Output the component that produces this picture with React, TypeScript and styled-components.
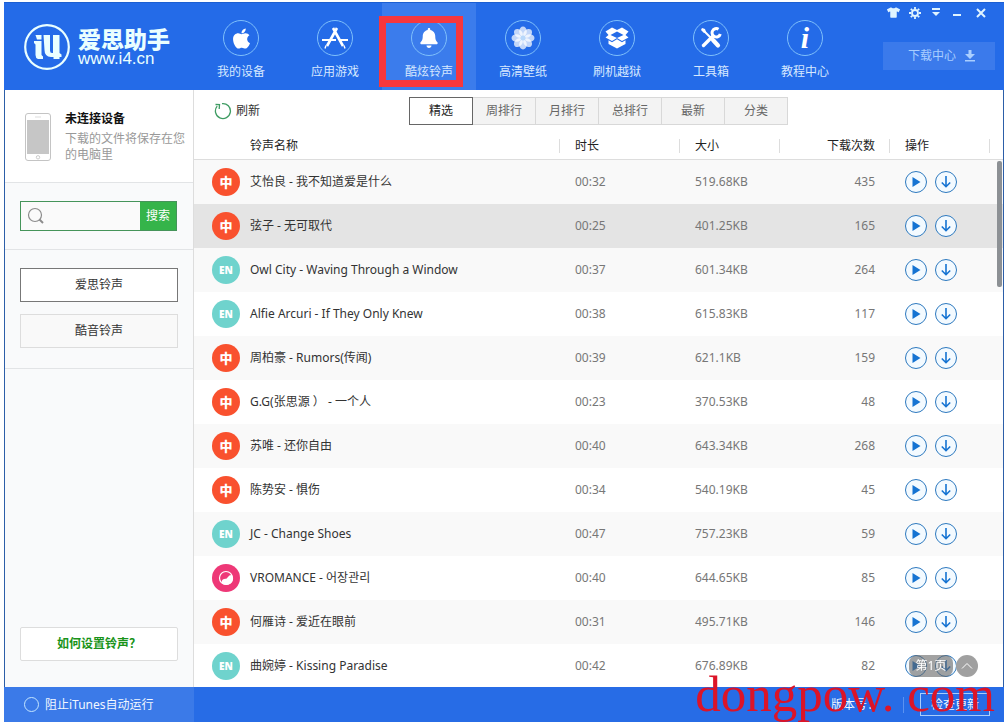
import React from "react";
import styled, { createGlobalStyle } from "styled-components";
import { FaApple, FaBell, FaTshirt } from "react-icons/fa";

const GlobalStyle = createGlobalStyle`
  * { box-sizing: border-box; }
  body {
    margin: 0;
    background: #fff;
    font-family: "Noto Sans", "Noto Sans CJK SC", "Noto Sans CJK KR", sans-serif;
    font-size: 12px;
    line-height: 16px;
    color: #333;
  }
  button, input { font: inherit; color: inherit; margin: 0; padding: 0; border-radius: 0; }
  button { cursor: pointer; }
`;

const Page = styled.div`
  height: 100vh;
  min-height: 560px;
  padding: 2px 2px 2px 4px;
`;

const AppWindow = styled.div`
  position: relative;
  height: 100%;
  display: grid;
  grid-template-rows: 88px minmax(0, 1fr) 35px;
  background: #fff;
`;

const Header = styled.header`
  display: flex;
  background: #246be8;
  border-top: 1px solid #1c5fd2;
  color: #e4f1ff;
`;

const Brand = styled.a`
  flex: none;
  width: 190px;
  padding: 0 0 0 20px;
  display: flex;
  align-items: center;
  gap: 8px;
  color: #eaffff;
  text-decoration: none;
`;

const BrandText = styled.span`
  display: flex;
  flex-direction: column;
`;

const BrandName = styled.strong`
  font-size: 23px;
  line-height: 24px;
  font-weight: 900;
  white-space: nowrap;
`;

const BrandUrl = styled.span`
  font-family: "Liberation Sans", sans-serif;
  font-size: 17px;
  line-height: 16px;
`;

const Nav = styled.nav`
  display: flex;
  flex: none;
`;

const NavItem = styled.a<{ $active?: boolean }>`
  position: relative;
  width: 94px;
  padding-top: 17px;
  display: flex;
  flex-direction: column;
  align-items: center;
  gap: 8px;
  color: #d6e8ff;
  text-decoration: none;
  background: ${(p) => (p.$active ? "#3b7cec" : "transparent")};
`;

const NavIcon = styled.span`
  width: 36px;
  height: 36px;
  display: grid;
  place-items: center;
  border: 1px solid #7fc0fb;
  border-radius: 50%;
  color: #fff;
`;

const Marker = styled.span`
  position: absolute;
  left: -3px;
  top: 13px;
  width: 84px;
  height: 71px;
  border: 7px solid #f7373d;
  pointer-events: none;
`;

const HeaderSide = styled.div`
  flex: 1;
  display: flex;
  flex-direction: column;
  align-items: flex-end;
  gap: 20px;
  padding-right: 9px;
`;

const WindowControls = styled.div`
  display: flex;
`;

const ControlButton = styled.button<{ $wide?: boolean }>`
  width: ${(p) => (p.$wide ? 28 : 21)}px;
  height: 19px;
  display: grid;
  place-items: center;
  border: 0;
  background: none;
  color: #e0f4ff;
`;

const DownloadCenter = styled.button`
  width: 112px;
  height: 28px;
  padding-left: 6px;
  display: flex;
  align-items: center;
  justify-content: center;
  gap: 8px;
  border: 0;
  background: #3b7aeb;
  color: #a9ceff;
`;

const Body = styled.div`
  display: grid;
  grid-template-columns: 189px minmax(0, 1fr);
  min-height: 0;
  border: solid #2c5ea8;
  border-width: 0 1px;
`;

const Sidebar = styled.aside`
  display: flex;
  flex-direction: column;
  background: #f9fafb;
  border-right: 1px solid #ddd;
`;

const Device = styled.section`
  height: 93px;
  display: flex;
  gap: 14px;
  padding: 23px 0 0 20px;
  background: #fff;
  border-bottom: 1px solid #e2e4e6;
`;

const DeviceTitle = styled.h2`
  margin: 0 0 6px;
  font-size: 12px;
  line-height: 12px;
  font-weight: 700;
  color: #111;
`;

const DeviceNote = styled.p`
  margin: 0;
  width: 124px;
  color: #999;
`;

const SearchSection = styled.form`
  height: 67px;
  padding: 18px 16px 18px 15px;
  border-bottom: 1px solid #e2e4e6;
`;

const SearchBox = styled.div`
  display: flex;
  height: 30px;
  border: 1px solid #45945a;
  background: #fafafa;
`;

const SearchLabel = styled.label`
  flex: 1;
  min-width: 0;
  display: flex;
  align-items: center;
  gap: 4px;
  padding-left: 6px;
`;

const SearchInput = styled.input.attrs({ type: "text" })`
  flex: 1;
  min-width: 0;
  border: 0;
  outline: 0;
  background: transparent;
`;

const SearchButton = styled.button`
  width: 36px;
  border: 0;
  background: #35b44a;
  color: #fff;
`;

const Sources = styled.section`
  display: flex;
  flex-direction: column;
  gap: 12px;
  padding: 18px 15px 20px;
  border-bottom: 1px solid #e2e4e6;
`;

const SourceButton = styled.button<{ $active?: boolean }>`
  height: 34px;
  border: 1px solid ${(p) => (p.$active ? "#777" : "#ddd")};
  background: ${(p) => (p.$active ? "#fff" : "#f9f9f9")};
`;

const HelpButton = styled.button`
  height: 34px;
  margin: auto 15px 26px;
  border: 1px solid #ddd;
  border-radius: 2px;
  background: #fff;
  color: #199319;
  font-weight: 700;
`;

const Main = styled.main`
  position: relative;
  display: flex;
  flex-direction: column;
  min-width: 0;
  min-height: 0;
`;

const Toolbar = styled.div`
  height: 42px;
  display: grid;
  grid-template-columns: 1fr auto 1fr;
  align-items: center;
  padding: 0 20px;
`;

const Refresh = styled.button`
  justify-self: start;
  display: flex;
  align-items: center;
  gap: 4px;
  border: 0;
  background: none;
`;

const Tabs = styled.div`
  display: flex;
`;

const Tab = styled.button<{ $active?: boolean }>`
  width: ${(p) => (p.$active ? 64 : 63)}px;
  height: 28px;
  border: 1px solid ${(p) => (p.$active ? "#666" : "#d8d8d8")};
  border-left-width: ${(p) => (p.$active ? 1 : 0)}px;
  background: ${(p) => (p.$active ? "#fff" : "#f3f3f3")};
  color: ${(p) => (p.$active ? "#222" : "#666")};
`;

const ListViewport = styled.div`
  flex: 1;
  min-height: 0;
  overflow-y: auto;
  scrollbar-width: none;
`;

const RingtoneTable = styled.table`
  width: 100%;
  table-layout: fixed;
  border-collapse: separate;
  border-spacing: 0;
`;

const HeadCell = styled.th<{ $name?: boolean; $end?: boolean }>`
  position: sticky;
  top: 0;
  height: 28px;
  padding: 0 15px 0 ${(p) => (p.$name ? 56 : 15)}px;
  border-bottom: 1px solid #ddd;
  background: linear-gradient(#ddd, #ddd) right center / 1px 14px no-repeat #fff;
  text-align: ${(p) => (p.$end ? "right" : "left")};
  font-weight: 400;
  color: #222;
`;

const HeadFiller = styled.td`
  border-bottom: 1px solid #ddd;
`;

const Row = styled.tr<{ $selected?: boolean }>`
  background: ${(p) => (p.$selected ? "#e4e4e4" : "#fff")};
  &:nth-child(odd) { background: #f9f9f9; }
`;

const Cell = styled.td<{ $end?: boolean }>`
  height: 44px;
  padding: 0 15px;
  text-align: ${(p) => (p.$end ? "right" : "left")};
  color: #777;
`;

const NameCell = styled.td`
  padding: 0 10px 0 18px;
  color: #333;
`;

const NameGroup = styled.div`
  display: flex;
  align-items: center;
  gap: 10px;
  white-space: nowrap;
`;

type Lang = "zh" | "en" | "kr";

const badgeColors: Record<Lang, string> = { zh: "#f9512e", en: "#6fd3cd", kr: "#ee3877" };

const Badge = styled.span<{ $lang: Lang }>`
  flex: none;
  width: 28px;
  height: 28px;
  display: grid;
  place-items: center;
  border-radius: 50%;
  background: ${(p) => badgeColors[p.$lang]};
  color: #fff;
  font-size: ${(p) => (p.$lang === "en" ? 10 : 13)}px;
  font-weight: 900;
`;

const Actions = styled.div`
  display: flex;
  gap: 8px;
`;

const RoundButton = styled.button`
  width: 22px;
  height: 22px;
  display: grid;
  place-items: center;
  border: 1px solid #2d79bf;
  border-radius: 50%;
  background: #f3faff;
  color: #1573d2;
`;

const ScrollThumb = styled.span`
  position: absolute;
  top: 71px;
  right: 1px;
  width: 5px;
  height: 126px;
  border-radius: 2px;
  background: #8c9094;
`;

const PageIndicator = styled.div`
  position: absolute;
  right: 25px;
  bottom: 10px;
  display: flex;
  align-items: center;
  gap: 3px;
`;

const PageLabel = styled.span`
  width: 44px;
  height: 22px;
  border-radius: 8px;
  background: rgba(100, 100, 100, 0.6);
  color: #fff;
  line-height: 21px;
  text-align: center;
`;

const BackToTop = styled.button`
  width: 22px;
  height: 22px;
  display: grid;
  place-items: center;
  border: 0;
  border-radius: 50%;
  background: #a0a0a0;
  color: #fff;
`;

const Footer = styled.footer`
  display: flex;
  background: #276ce6;
  color: #f1f7ff;
`;

const ItunesToggle = styled.label`
  width: 190px;
  display: flex;
  align-items: center;
  gap: 6px;
  padding-left: 20px;
  background: #3b7ae8;
`;

const RoundCheck = styled.input.attrs({ type: "checkbox" })`
  appearance: none;
  width: 15px;
  height: 15px;
  border: 1px solid #c3e5ff;
  border-radius: 50%;
`;

const FooterSide = styled.div`
  flex: 1;
  display: flex;
  align-items: center;
  justify-content: flex-end;
  padding-right: 14px;
`;

const Version = styled.span`
  width: 73px;
  border-right: 1px solid #5b92f0;
`;

const UpdateButton = styled.button`
  width: 70px;
  height: 23px;
  margin-left: 16px;
  border: 1px solid #a9cdfb;
  background: transparent;
`;

const Watermark = styled.span`
  position: absolute;
  right: 9px;
  bottom: 1px;
  font-family: "Liberation Serif", serif;
  font-size: 51px;
  line-height: 54px;
  color: #dc1428;
  white-space: nowrap;
  pointer-events: none;
`;

const LogoMark = () => (
  <svg width="46" height="46" viewBox="0 0 46 46" fill="none" stroke="#eaffff">
    <circle cx="23" cy="23" r="21.8" strokeWidth="2.2" />
    <g fill="#eaffff" stroke="none">
      <path d="M11.500 11h6v4.500h-4.500z" />
      <path d="M10 17h7.500v14l1.500 1.500V35h-5q-2.500-1-2.500-4V20.500L10 19z" />
      <path d="M19.500 11H26v15.500q0 2.500 2 2.500h1V11h6.500v18l2 1.500V33h-2v2h-6v-2h-2.500q-6.500-.5-6.500-7z" />
    </g>
  </svg>
);

const StoreIcon = () => (
  <svg width="26" height="24" viewBox="0 0 26 24" fill="none" stroke="currentColor" strokeWidth="2.2">
    <path d="M15 2 5 20M11 2l10 18" strokeWidth="2.6" />
    <path d="M0 14h14M17 14h9" />
    <path d="M4 19.500l-1 3M22 19.500l1 3" strokeWidth="1.400" />
  </svg>
);

const FlowerIcon = () => (
  <svg width="24" height="24" viewBox="0 0 24 24" fill="currentColor">
    {[0, 45, 90, 135, 180, 225, 270, 315].map((angle) => (
      <ellipse key={angle} cx="12" cy="5.500" rx="3.800" ry="5" opacity="0.72" transform={`rotate(${angle} 12 12)`} />
    ))}
    <circle cx="12" cy="12" r="2.500" fill="#b8d8fb" />
  </svg>
);

const BoxIcon = () => (
  <svg width="24" height="22" viewBox="0 0 24 22" fill="currentColor">
    <path fillRule="evenodd" d="M7 .5 12 3l5-2.500L23.500 4.500 20.500 8l3 2.500L17 14l-5-3-5 3L.5 10.500l3-2.500-3-3.500zM12 4.500 5.500 8l6.500 3 6.500-3z" />
    <path d="M3.500 13.200 7 15.200l5-3 5 3 3.500-2V17L12 21.500 3.500 17z" />
  </svg>
);

const ToolsIcon = () => (
  <svg width="22" height="22" viewBox="0 0 22 22" fill="none" stroke="currentColor" strokeLinecap="round">
    <path d="M3 3l9 9" strokeWidth="2" />
    <path d="M2 1l3 1 1 3-2 1-3-3z" fill="currentColor" stroke="none" />
    <path d="M13 13l5 5.500" strokeWidth="4.200" />
    <path d="M3.500 18.500 13 9" strokeWidth="3.400" />
    <path d="M18.500 2.200a4.200 4.200 0 1 0 1.800 4.800" strokeWidth="3" strokeLinecap="butt" />
  </svg>
);

const InfoGlyph = styled.span`
  font-family: "Liberation Serif", serif;
  font-size: 30px;
  line-height: 30px;
  font-weight: 700;
  font-style: italic;
`;

const GearIcon = () => (
  <svg width="12" height="12" viewBox="0 0 12 12" fill="none" stroke="currentColor">
    <circle cx="6" cy="6" r="3" strokeWidth="1.800" />
    <path d="M6 0v2M6 10v2M0 6h2M10 6h2M1.800 1.800l1.400 1.400M8.800 8.800l1.400 1.400M1.800 10.200l1.400-1.400M8.800 3.200l1.400-1.400" strokeWidth="1.800" />
  </svg>
);

const MenuIcon = () => (
  <svg width="10" height="9" viewBox="0 0 10 9" fill="currentColor">
    <path d="M1 0h8v2H1zM1 4h8L5 8z" />
  </svg>
);

const MinimizeIcon = () => (
  <svg width="8" height="8" viewBox="0 0 8 8" fill="currentColor">
    <path d="M0 5h8v2H0z" />
  </svg>
);

const CloseIcon = () => (
  <svg width="10" height="10" viewBox="0 0 10 10" stroke="currentColor" strokeWidth="2">
    <path d="M1 1l8 8M9 1 1 9" />
  </svg>
);

const TrayDownIcon = () => (
  <svg width="12" height="12" viewBox="0 0 12 12" fill="currentColor">
    <path d="M4.500 0h3v4H11L6 9 1 4h3.500zM1 10h10v1.500H1z" />
  </svg>
);

const PhoneIcon = () => (
  <svg width="26" height="48" viewBox="0 0 26 48">
    <rect x="0.500" y="0.500" width="25" height="47" rx="2.500" fill="#fff" stroke="#c4c4c4" />
    <rect x="2" y="7" width="22" height="34" fill="#c6c6c6" />
    <path d="M10 4h6" stroke="#ddd" />
    <circle cx="13" cy="44.300" r="1.700" fill="none" stroke="#ccc" />
  </svg>
);

const SearchIcon = () => (
  <svg width="18" height="18" viewBox="0 0 18 18" fill="none" stroke="#8c8c8c">
    <circle cx="8" cy="8" r="6.500" strokeWidth="1.200" />
    <path d="M12.500 12.500l3.500 3.500" strokeWidth="2" />
  </svg>
);

const RefreshIcon = () => (
  <svg width="18" height="18" viewBox="0 0 18 18" fill="none" stroke="#3f9c63" strokeWidth="1.300">
    <path d="M8 1.600a7.500 7.500 0 1 1-4.800 2.600" />
    <path d="M1.500 2.500l4 .2-.3 4.300" />
  </svg>
);

const SwirlIcon = () => (
  <svg width="16" height="16" viewBox="0 0 16 16">
    <circle cx="8" cy="8" r="6.500" fill="none" stroke="#fff" strokeWidth="1.200" />
    <path d="M14 5A6.500 6.500 0 0 1 4 13.200C3 10.500 5 8.800 7.500 8.800S10 4.500 14 5z" fill="#fff" />
  </svg>
);

const PlayIcon = () => (
  <svg width="10" height="10" viewBox="0 0 10 10" fill="currentColor">
    <path d="M1.500 0 9.500 5l-8 5z" />
  </svg>
);

const DownIcon = () => (
  <svg width="12" height="12" viewBox="0 0 12 12" fill="none" stroke="currentColor" strokeWidth="1.600">
    <path d="M6 0v10.500M1.800 6.500 6 10.700l4.200-4.200" />
  </svg>
);

const UpIcon = () => (
  <svg width="12" height="8" viewBox="0 0 12 8" fill="none" stroke="currentColor">
    <path d="M1 6.500 6 1.500l5 5" />
  </svg>
);

const navItems: { label: string; icon: React.ReactNode; active?: boolean }[] = [
  { label: "我的设备", icon: <FaApple size={23} /> },
  { label: "应用游戏", icon: <StoreIcon /> },
  { label: "酷炫铃声", icon: <FaBell size={20} />, active: true },
  { label: "高清壁纸", icon: <FlowerIcon /> },
  { label: "刷机越狱", icon: <BoxIcon /> },
  { label: "工具箱", icon: <ToolsIcon /> },
  { label: "教程中心", icon: <InfoGlyph>i</InfoGlyph> },
];

const tabs = ["精选", "周排行", "月排行", "总排行", "最新", "分类"];

const ringtones: { lang: Lang; name: string; time: string; size: string; count: number }[] = [
  { lang: "zh", name: "艾怡良 - 我不知道爱是什么", time: "00:32", size: "519.68KB", count: 435 },
  { lang: "zh", name: "弦子 - 无可取代", time: "00:25", size: "401.25KB", count: 165 },
  { lang: "en", name: "Owl City - Waving Through a Window", time: "00:37", size: "601.34KB", count: 264 },
  { lang: "en", name: "Alfie Arcuri - If They Only Knew", time: "00:38", size: "615.83KB", count: 117 },
  { lang: "zh", name: "周柏豪 - Rumors(传闻)", time: "00:39", size: "621.1KB", count: 159 },
  { lang: "zh", name: "G.G(张思源 ） - 一个人", time: "00:23", size: "370.53KB", count: 48 },
  { lang: "zh", name: "苏唯 - 还你自由", time: "00:40", size: "643.34KB", count: 268 },
  { lang: "zh", name: "陈势安 - 惧伤", time: "00:34", size: "540.19KB", count: 45 },
  { lang: "en", name: "JC - Change Shoes", time: "00:47", size: "757.23KB", count: 59 },
  { lang: "kr", name: "VROMANCE - 어장관리", time: "00:40", size: "644.65KB", count: 85 },
  { lang: "zh", name: "何雁诗 - 爱近在眼前", time: "00:31", size: "495.71KB", count: 146 },
  { lang: "en", name: "曲婉婷 - Kissing Paradise", time: "00:42", size: "676.89KB", count: 82 },
];

const badgeContent: Record<Lang, React.ReactNode> = { zh: "中", en: "EN", kr: <SwirlIcon /> };

export default function App() {
  return (
    <Page>
      <GlobalStyle />
      <AppWindow>
        <Header>
          <Brand href="#">
            <LogoMark />
            <BrandText>
              <BrandName>爱思助手</BrandName>
              <BrandUrl>www.i4.cn</BrandUrl>
            </BrandText>
          </Brand>
          <Nav>
            {navItems.map((item) => (
              <NavItem key={item.label} href="#" $active={item.active}>
                <NavIcon>{item.icon}</NavIcon>
                {item.label}
                {item.active && <Marker />}
              </NavItem>
            ))}
          </Nav>
          <HeaderSide>
            <WindowControls>
              <ControlButton aria-label="皮肤"><FaTshirt size={13} /></ControlButton>
              <ControlButton aria-label="设置"><GearIcon /></ControlButton>
              <ControlButton aria-label="菜单"><MenuIcon /></ControlButton>
              <ControlButton aria-label="最小化"><MinimizeIcon /></ControlButton>
              <ControlButton aria-label="关闭" $wide><CloseIcon /></ControlButton>
            </WindowControls>
            <DownloadCenter>
              下载中心
              <TrayDownIcon />
            </DownloadCenter>
          </HeaderSide>
        </Header>

        <Body>
          <Sidebar>
            <Device>
              <PhoneIcon />
              <div>
                <DeviceTitle>未连接设备</DeviceTitle>
                <DeviceNote>下载的文件将保存在您的电脑里</DeviceNote>
              </div>
            </Device>
            <SearchSection onSubmit={(e) => e.preventDefault()}>
              <SearchBox>
                <SearchLabel>
                  <SearchIcon />
                  <SearchInput aria-label="搜索铃声" />
                </SearchLabel>
                <SearchButton>搜索</SearchButton>
              </SearchBox>
            </SearchSection>
            <Sources>
              <SourceButton $active>爱思铃声</SourceButton>
              <SourceButton>酷音铃声</SourceButton>
            </Sources>
            <HelpButton>如何设置铃声？</HelpButton>
          </Sidebar>

          <Main>
            <Toolbar>
              <Refresh>
                <RefreshIcon />
                刷新
              </Refresh>
              <Tabs>
                {tabs.map((tab, index) => (
                  <Tab key={tab} $active={index === 0}>{tab}</Tab>
                ))}
              </Tabs>
            </Toolbar>
            <ListViewport>
              <RingtoneTable>
                <colgroup>
                  <col />
                  <col width="120" />
                  <col width="100" />
                  <col width="110" />
                  <col width="100" />
                  <col width="13" />
                </colgroup>
                <thead>
                  <tr>
                    <HeadCell $name>铃声名称</HeadCell>
                    <HeadCell>时长</HeadCell>
                    <HeadCell>大小</HeadCell>
                    <HeadCell $end>下载次数</HeadCell>
                    <HeadCell>操作</HeadCell>
                    <HeadFiller />
                  </tr>
                </thead>
                <tbody>
                  {ringtones.map((tone, index) => (
                    <Row key={tone.name} $selected={index === 1}>
                      <NameCell>
                        <NameGroup>
                          <Badge $lang={tone.lang}>{badgeContent[tone.lang]}</Badge>
                          {tone.name}
                        </NameGroup>
                      </NameCell>
                      <Cell>{tone.time}</Cell>
                      <Cell>{tone.size}</Cell>
                      <Cell $end>{tone.count}</Cell>
                      <Cell>
                        <Actions>
                          <RoundButton aria-label="播放"><PlayIcon /></RoundButton>
                          <RoundButton aria-label="下载"><DownIcon /></RoundButton>
                        </Actions>
                      </Cell>
                      <td />
                    </Row>
                  ))}
                </tbody>
              </RingtoneTable>
            </ListViewport>
            <ScrollThumb />
            <PageIndicator>
              <PageLabel>第1页</PageLabel>
              <BackToTop aria-label="返回顶部"><UpIcon /></BackToTop>
            </PageIndicator>
          </Main>
        </Body>

        <Footer>
          <ItunesToggle>
            <RoundCheck />
            阻止iTunes自动运行
          </ItunesToggle>
          <FooterSide>
            <Version>版本号：</Version>
            <UpdateButton>检查更新</UpdateButton>
          </FooterSide>
        </Footer>
        <Watermark>dongpow. com</Watermark>
      </AppWindow>
    </Page>
  );
}
